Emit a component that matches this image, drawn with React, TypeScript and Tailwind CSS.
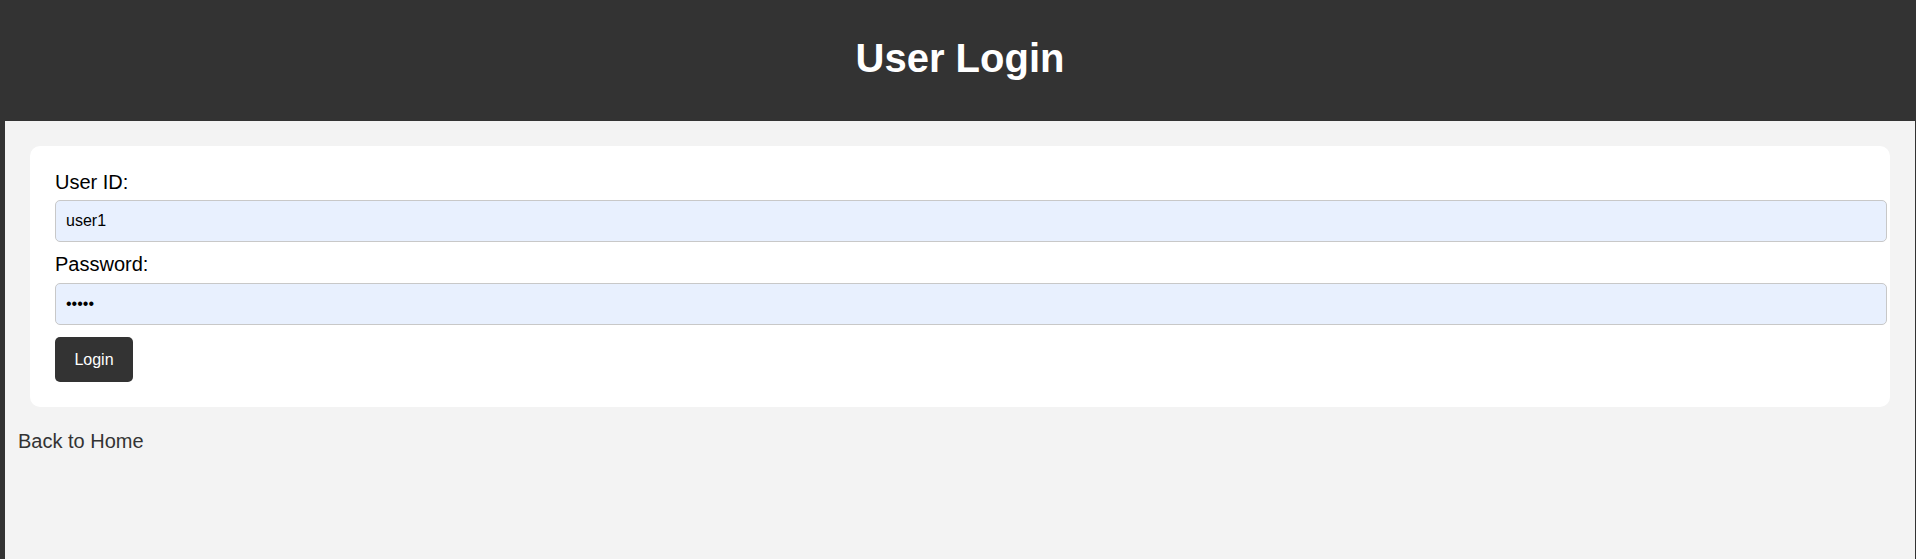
export default function App() {
  return (
    <div className="min-h-[559px] bg-[#333333] flex flex-col font-['Liberation_Sans',Arial,sans-serif]">
      {/* Header */}
      <header className="h-[121px] pt-[35px] pl-[5px] pr-px text-center">
        <h1 className="text-[40px] leading-[46px] font-bold text-white">User Login</h1>
      </header>

      <main className="flex-1 ml-[5px] mr-px bg-[#f3f3f3] pt-[25px]">
        <div className="mx-[25px] bg-white rounded-[10px] p-[25px]">
          <form onSubmit={e => e.preventDefault()}>
            <label className="block text-[20px] leading-[23px] text-black mb-[6px]">User ID:</label>
            <input
              type="text"
              defaultValue="user1"
              className="block w-[calc(100%+22px)] h-[42px] px-[10px] text-[16px] text-black bg-[#e8f0fe] border border-[#c8c8c8] rounded-[5px] mb-[11px] outline-none"
            />
            <label className="block text-[20px] leading-[23px] text-black mb-[7px]">Password:</label>
            <input
              type="password"
              defaultValue="pass1"
              className="block w-[calc(100%+22px)] h-[42px] px-[10px] text-[16px] text-black bg-[#e8f0fe] border border-[#c8c8c8] rounded-[5px] mb-[12px] outline-none"
            />
            <button
              type="submit"
              className="h-[45px] w-[78px] bg-[#333333] text-white text-[16px] rounded-[5px]"
            >
              Login
            </button>
          </form>
        </div>

        <a href="#" className="block mt-[23px] ml-[13px] text-[20px] leading-[23px] text-[#333333]">
          Back to Home
        </a>
      </main>
    </div>
  );
}
